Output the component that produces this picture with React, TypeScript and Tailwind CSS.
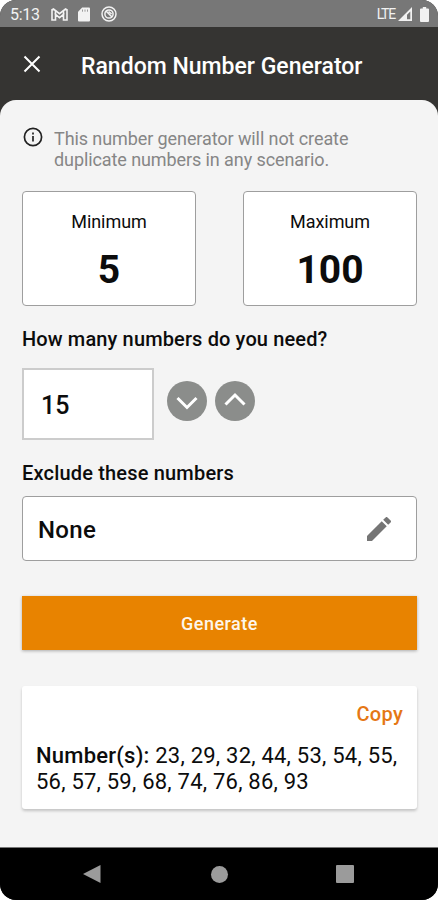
import { useState } from 'react';

const results = [23, 29, 32, 44, 53, 54, 55, 56, 57, 59, 68, 74, 76, 86, 93];

export default function App() {
  const [count, setCount] = useState(15);

  return (
    <div className="h-[900px] w-[438px] bg-white font-[Roboto,sans-serif] text-[#0c0c0c]">
      <main className="flex h-full flex-col overflow-hidden rounded-t-[16px] rounded-b-[16px] bg-[#353432]">
        <StatusBar />
        <header className="flex h-[73px] shrink-0 items-center pt-[6px] pl-[23px] text-white">
          <button aria-label="Close" className="-mt-[5px] h-[18px] w-[18px]">
            <svg viewBox="0 0 18 18" className="h-[18px] w-[18px]" fill="none" stroke="currentColor" strokeWidth="2">
              <path d="M1.5 1.5l15 15M16.5 1.5l-15 15" />
            </svg>
          </button>
          <h1 className="ml-10 text-[23px] leading-[30px] font-medium whitespace-nowrap">Random Number Generator</h1>
        </header>

        <section className="flex grow flex-col rounded-t-[16px] bg-[#f4f4f4] pr-[21px] pl-[22px]">
          <div className="mt-7 flex text-[#868686]">
            <InfoIcon />
            <p className="ml-[11px] text-[18px] leading-[21px] tracking-[-0.09px] whitespace-nowrap">
              This number generator will not create
              <br />
              duplicate numbers in any scenario.
            </p>
          </div>

          <div className="mt-[21px] flex justify-between">
            <Limit label="Minimum" value={5} />
            <Limit label="Maximum" value={100} />
          </div>

          <h2 className="mt-5 text-[20px] leading-[26px] font-medium tracking-[0.13px]">How many numbers do you need?</h2>
          <div className="mt-4 flex">
            <div className="flex h-[72px] w-[132px] items-center border-2 border-[#cccccc] bg-white pt-1 pl-[17px] text-[25px] font-medium">
              {count}
            </div>
            <button aria-label="Less" onClick={() => setCount(count - 1)} className="mt-[13px] ml-[13px] h-10 w-10 rounded-full bg-[#8b8d8b]">
              <Chevron d="M10.5 17l9.5 9.5 9.5-9.5" />
            </button>
            <button aria-label="More" onClick={() => setCount(count + 1)} className="mt-[13px] ml-2 h-10 w-10 rounded-full bg-[#8b8d8b]">
              <Chevron d="M10.5 23.5l9.5-9.5 9.5 9.5" />
            </button>
          </div>

          <h2 className="mt-5 text-[20px] leading-[26px] font-medium tracking-[0.18px]">Exclude these numbers</h2>
          <div className="mt-[10px] flex h-[65px] items-center justify-between rounded-[4px] border border-[#9e9e9e] bg-white pr-[25px] pl-[15px]">
            <span className="pt-0.5 text-[24px] font-medium tracking-[0.3px]">None</span>
            <svg viewBox="3 3 18 18" className="h-6 w-6" fill="#757575">
              <path d="M3 17.25V21h3.75L17.81 9.94l-3.75-3.75L3 17.25zM20.71 7.04a1 1 0 0 0 0-1.41l-2.34-2.34a1 1 0 0 0-1.41 0l-1.83 1.83 3.75 3.75 1.83-1.83z" />
            </svg>
          </div>

          <button className="mt-[35px] h-[54px] shrink-0 bg-[#e88300] text-[18px] font-medium tracking-[0.5px] text-[#fdf6ec] shadow-[0_1px_3px_rgba(0,0,0,0.3)]">
            Generate
          </button>

          <div className="mt-9 h-[123px] rounded-[3px] bg-white px-[14px] shadow-[0_2px_3px_rgba(0,0,0,0.2)]">
            <div className="flex justify-end pt-[15px]">
              <button className="text-[20px] leading-[26px] font-medium tracking-[0.3px] text-[#e57714]">Copy</button>
            </div>
            <p className="mt-4 text-[22px] leading-[26px] tracking-[0.22px] whitespace-nowrap">
              <span className="font-medium">Number(s):</span> {results.slice(0, 7).join(', ')},
              <br />
              {results.slice(7).join(', ')}
            </p>
          </div>
        </section>

        <NavigationBar />
      </main>
    </div>
  );
}

function StatusBar() {
  return (
    <div className="flex h-[27px] shrink-0 items-center bg-[#777777] pt-px pr-[9px] pl-[10px] text-[#f2f2f2]">
      <span className="w-[41px] pt-px text-[16px] tracking-[-0.3px]">5:13</span>
      <svg viewBox="0 0 17 13" className="h-[13px] w-[17px]" fill="none" stroke="currentColor" strokeWidth="1.6">
        <path d="M1 12V1.8L2.5 1l6 4.7 6-4.7 1.5.8V12h-3.5V6.5l-4 3.2-4-3.2V12z" />
        <path d="M4.5 2.6v3.9M12.5 2.6v3.9" />
      </svg>
      <svg viewBox="0 0 12 15" className="ml-2.5 h-[15px] w-3" fill="currentColor">
        <path d="M4.2.5H11a1 1 0 0 1 1 1v12a1 1 0 0 1-1 1H1a1 1 0 0 1-1-1V4.7z" />
        <path d="M4.5 2.5v2.2M7 2.5v2.2M9.5 2.5v2.2" stroke="#777777" strokeWidth="0.7" />
      </svg>
      <svg viewBox="0 0 16 16" className="ml-[11px] h-4 w-4" fill="none" stroke="currentColor" strokeWidth="1.5">
        <circle cx="8" cy="8" r="7" />
        <circle cx="8" cy="8" r="4.1" />
        <path d="M5 5l6 6M7.6 5.5l3 2.5" />
      </svg>
      <span className="ml-auto text-[14px] tracking-[-1.2px]">LTE</span>
      <svg viewBox="0 0 14 14" className="ml-[3px] h-3.5 w-3.5" fill="currentColor">
        <path fillRule="evenodd" d="M14 0v14H0zM12.3 4.5L9 7.8v4.5h3.3z" />
      </svg>
      <svg viewBox="0 0 9 15" className="ml-2 h-[15px] w-[9px]" fill="currentColor">
        <path d="M2.8 0h3.4v1.5H8a1 1 0 0 1 1 1V14a1 1 0 0 1-1 1H1a1 1 0 0 1-1-1V2.5a1 1 0 0 1 1-1h1.8z" />
      </svg>
    </div>
  );
}

function InfoIcon() {
  return (
    <svg viewBox="0 0 20 20" className="mt-[-1px] ml-[1px] h-5 w-5" fill="none" stroke="#222222" strokeWidth="1.7">
      <circle cx="10" cy="10" r="8.6" />
      <path d="M10 9v5.5M10 5.5v1.9" />
    </svg>
  );
}

function Limit({ label, value }: { label: string; value: number }) {
  return (
    <div className="flex h-[115px] w-[174px] flex-col items-center rounded-[4px] border border-[#9e9e9e] bg-white pt-[17px]">
      <span className="text-[18px] leading-[26px] tracking-[-0.05px]">{label}</span>
      <span className="mt-3 text-[39px] leading-[46px] font-bold">{value}</span>
    </div>
  );
}

function Chevron({ d }: { d: string }) {
  return (
    <svg viewBox="0 0 40 40" className="h-10 w-10" fill="none" stroke="white" strokeWidth="3">
      <path d={d} />
    </svg>
  );
}

function NavigationBar() {
  return (
    <nav className="flex h-[53px] shrink-0 items-center justify-between border-t border-[#777777] bg-black pr-[84px] pl-[83px]">
      <svg viewBox="0 0 18 18" className="h-[18px] w-[18px]" fill="#9b9b9b">
        <path d="M17.5 0v18L0 9z" />
      </svg>
      <span className="ml-px h-[17px] w-[17px] rounded-full bg-[#9b9b9b]" />
      <span className="h-[18px] w-[18px] rounded-[1px] bg-[#9b9b9b]" />
    </nav>
  );
}
